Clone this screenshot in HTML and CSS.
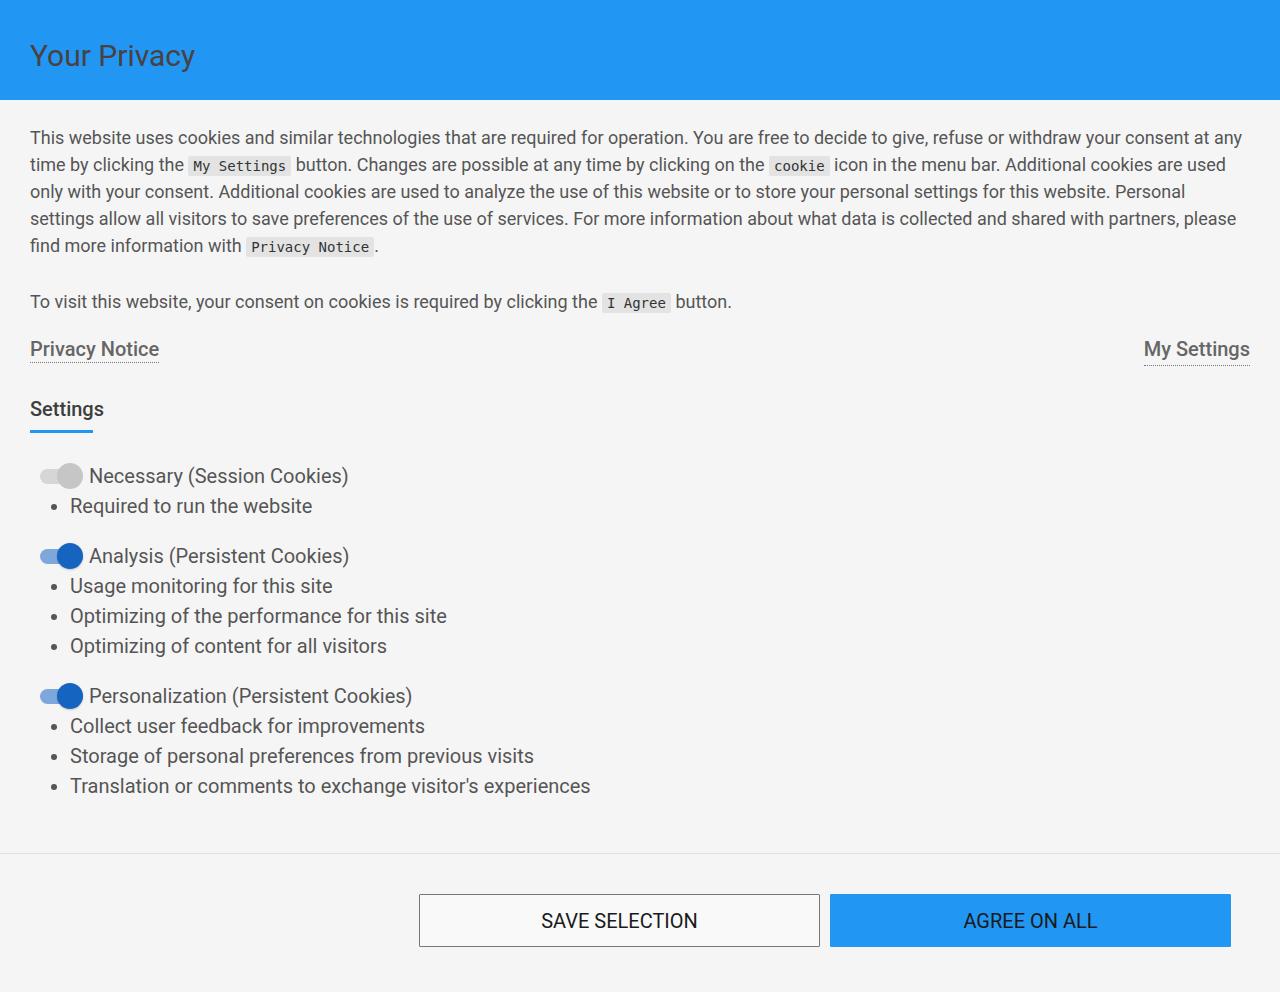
FILE: index.html
```html
<!DOCTYPE html>
<html lang="en">
<head>
<meta charset="utf-8">
<title>Your Privacy</title>
<link rel="stylesheet" href="styles.css">
</head>
<body>
<header class="header">
  <h1 class="title">Your Privacy</h1>
</header>
<main class="content">
  <p class="text text-intro">This website uses cookies and similar technologies that are required for operation. You are free to decide to give, refuse or withdraw your consent at any time by clicking the <code class="code">My Settings</code> button. Changes are possible at any time by clicking on the <code class="code">cookie</code> icon in the menu bar. Additional cookies are used only with your consent. Additional cookies are used to analyze the use of this website or to store your personal settings for this website. Personal settings allow all visitors to save preferences of the use of services. For more information about what data is collected and shared with partners, please find more information with <code class="code">Privacy Notice</code>.</p>
  <p class="text text-consent">To visit this website, your consent on cookies is required by clicking the <code class="code">I Agree</code> button.</p>
  <div class="links">
    <a class="link" href="#">Privacy Notice</a>
    <a class="link link-right" href="#">My Settings</a>
  </div>
  <div class="tabs">
    <span class="tab">Settings</span>
  </div>
  <section class="category">
    <div class="cat-head">
      <span class="toggle toggle-disabled"><span class="knob"></span></span>
      <span class="cat-label">Necessary (Session Cookies)</span>
    </div>
    <ul class="items">
      <li>Required to run the website</li>
    </ul>
  </section>
  <section class="category">
    <div class="cat-head">
      <span class="toggle toggle-on"><span class="knob"></span></span>
      <span class="cat-label">Analysis (Persistent Cookies)</span>
    </div>
    <ul class="items">
      <li>Usage monitoring for this site</li>
      <li>Optimizing of the performance for this site</li>
      <li>Optimizing of content for all visitors</li>
    </ul>
  </section>
  <section class="category">
    <div class="cat-head">
      <span class="toggle toggle-on"><span class="knob"></span></span>
      <span class="cat-label">Personalization (Persistent Cookies)</span>
    </div>
    <ul class="items">
      <li>Collect user feedback for improvements</li>
      <li>Storage of personal preferences from previous visits</li>
      <li>Translation or comments to exchange visitor's experiences</li>
    </ul>
  </section>
</main>
<footer class="footer">
  <button class="btn btn-outline">SAVE SELECTION</button>
  <button class="btn btn-primary">AGREE ON ALL</button>
</footer>
</body>
</html>
```
FILE: styles.css
```css
* { box-sizing: border-box; }
html, body {
  margin: 0;
  padding: 0;
  background: #f5f5f5;
  font-family: Roboto, "Noto Sans", sans-serif;
  color: #555;
}
.header {
  background: #2196f3;
  height: 100px;
  display: flex;
  align-items: center;
  padding: 10px 30px 0;
}
.title {
  margin: 0;
  font-size: 30px;
  font-weight: 400;
  color: #4b4141;
}
.content {
  padding: 24px 30px 0 30px;
  height: 753px;
}
.text {
  margin: 0;
  font-size: 18px;
  line-height: 27px;
  color: #555;
}
.text-intro { margin-bottom: 29px; }
.text-consent { margin-bottom: 22px; }
.code {
  font-family: "DejaVu Sans Mono", "Liberation Mono", monospace;
  font-size: 14px;
  line-height: 1;
  background: #e3e3e3;
  color: #333;
  padding: 2px 5px;
  border-radius: 2px;
}
.links {
  display: flex;
  justify-content: space-between;
  align-items: flex-start;
}
.link {
  font-size: 20px;
  font-weight: 500;
  line-height: 24px;
  color: #666;
  text-decoration: none;
  border-bottom: 1px dotted #777;
  padding-bottom: 1px;
}
.link-right { padding-bottom: 4px; }
.tabs {
  margin-top: 31px;
  height: 48px;
}
.tab {
  display: inline-block;
  position: relative;
  font-size: 20px;
  font-weight: 500;
  line-height: 24px;
  color: #3d3d3d;
}
.tab::after {
  content: "";
  position: absolute;
  left: 0;
  top: 33px;
  width: 63px;
  height: 3px;
  background: #2196f3;
}
.category {
  margin-top: 16px;
}
.category + .category { margin-top: 20px; }
.cat-head {
  display: flex;
  align-items: center;
  height: 30px;
  padding-left: 10px;
}
.toggle {
  position: relative;
  width: 43px;
  height: 15px;
  border-radius: 8px;
  margin-right: 6px;
  flex-shrink: 0;
}
.knob {
  position: absolute;
  right: 0;
  top: -6px;
  width: 26px;
  height: 26px;
  border-radius: 50%;
}
.toggle-disabled { background: #d6d6d6; }
.toggle-disabled .knob { background: #c6c6c6; }
.toggle-on { background: #7ea7db; }
.toggle-on .knob { background: #1565c0; box-shadow: 0 1px 2px rgba(0,0,0,0.2); }
.cat-label {
  font-size: 20px;
  line-height: 30px;
  color: #555;
}
.items {
  margin: 0;
  padding-left: 40px;
  font-size: 20px;
  line-height: 30px;
  color: #555;
}
.footer {
  border-top: 1px solid #e0e0e0;
  height: 139px;
  display: flex;
  justify-content: flex-end;
  align-items: flex-start;
  gap: 10px;
  padding: 40px 49px 0 0;
}
.btn {
  width: 401px;
  height: 53px;
  font-family: Roboto, sans-serif;
  font-size: 20px;
  font-weight: 400;
  color: #1a1a1a;
  cursor: pointer;
  border-radius: 1px;
}
.btn-outline {
  background: #f9f9f9;
  border: 1px solid #777;
}
.btn-primary {
  background: #2196f3;
  border: 1px solid #2196f3;
}
```
